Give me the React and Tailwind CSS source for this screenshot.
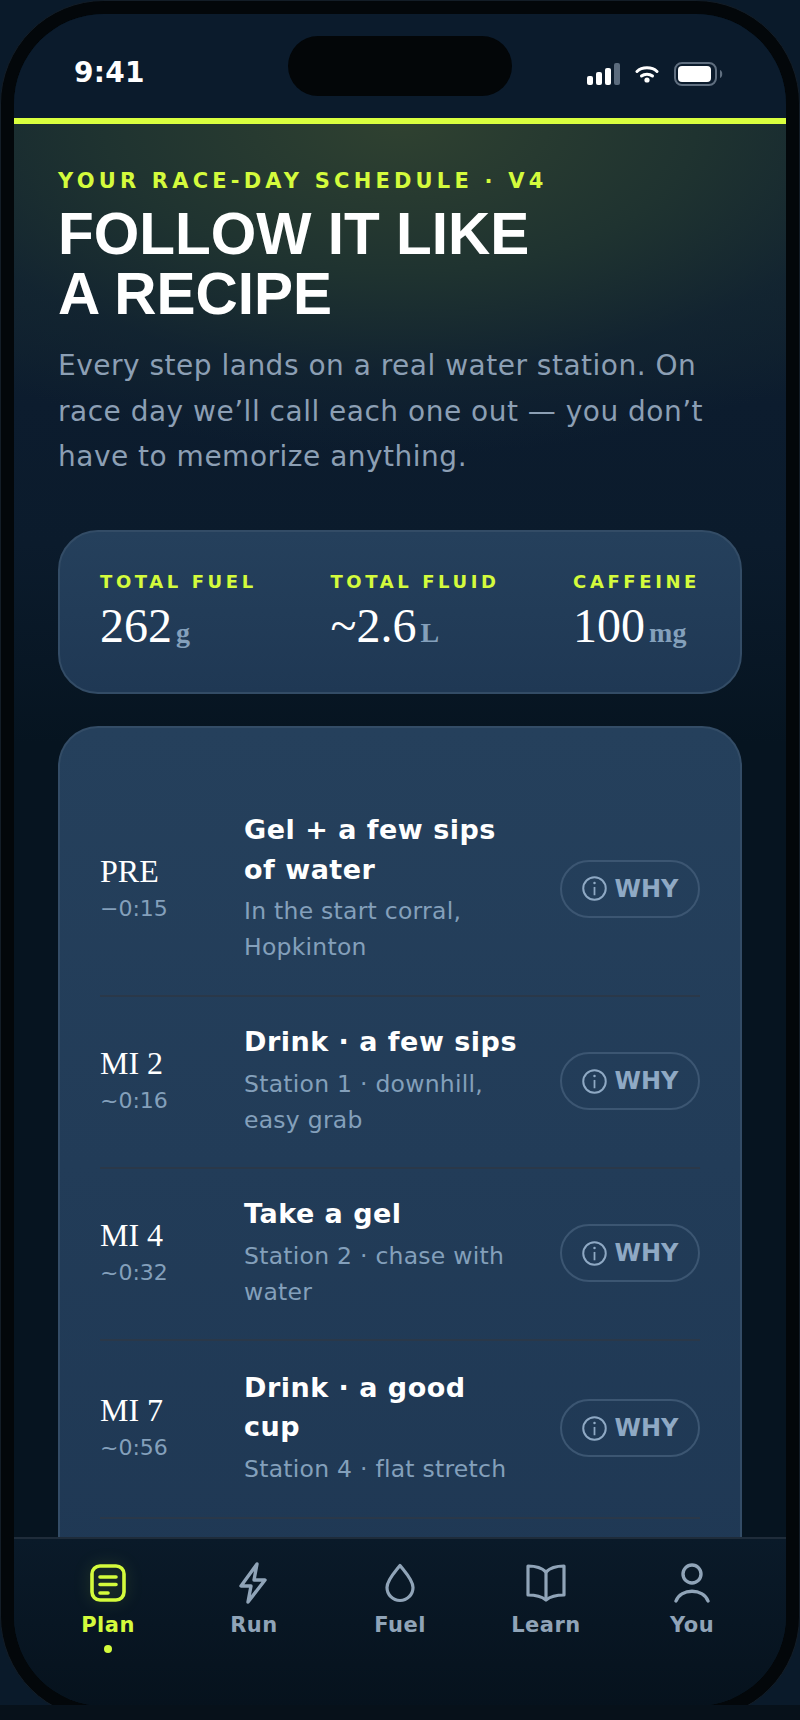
const rows = [
  { mile: "PRE", time: "−0:15", title: "Gel + a few sips of water", note: "In the start corral, Hopkinton", h: "h-[213px]" },
  { mile: "MI 2", time: "~0:16", title: "Drink · a few sips", note: "Station 1 · downhill, easy grab", h: "h-[172px]" },
  { mile: "MI 4", time: "~0:32", title: "Take a gel", note: "Station 2 · chase with water", h: "h-[172px]" },
  { mile: "MI 7", time: "~0:56", title: "Drink · a good cup", note: "Station 4 · flat stretch", h: "h-[178px]" },
];

function StatusIcons() {
  return (
    <div className="mt-[3px] flex items-center gap-[15px]">
      <svg width="33" height="22" viewBox="0 0 33 22">
        <rect x="0" y="13" width="6" height="9" rx="2" fill="#fff" />
        <rect x="9" y="9" width="6" height="13" rx="2" fill="#fff" />
        <rect x="18" y="5" width="6" height="17" rx="2" fill="#fff" />
        <rect x="27" y="0" width="6" height="22" rx="2" fill="#5b6b7d" />
      </svg>
      <svg width="24" height="18" viewBox="0 0 24 18" fill="none" stroke="#fff" strokeWidth="3" strokeLinecap="round">
        <path d="M2 6.5 C7 1.5 17 1.5 22 6.5" />
        <path d="M6.5 11 C9.5 8.5 14.5 8.5 17.5 11" />
        <circle cx="12" cy="15" r="2.6" fill="#fff" stroke="none" />
      </svg>
      <svg width="49" height="24" viewBox="0 0 49 24" fill="none">
        <rect x="1" y="1" width="41" height="22" rx="7" stroke="#5f6e7f" strokeWidth="2" />
        <rect x="4" y="4" width="33" height="16" rx="4" fill="#fff" />
        <path d="M46 8 C49 9 49 15 46 16 Z" fill="#5f6e7f" />
      </svg>
    </div>
  );
}

function InfoIcon() {
  return (
    <svg width="25" height="25" viewBox="0 0 24 24" fill="none" stroke="currentColor" strokeWidth="1.9">
      <circle cx="12" cy="12" r="10.8" />
      <path d="M12 10.5 V18.5" strokeWidth="1.7" />
      <circle cx="12" cy="6.8" r="1.2" fill="currentColor" stroke="none" />
    </svg>
  );
}

function Row({ mile, time, title, note, h }) {
  return (
    <div className={`${h} flex items-center border-b-2 border-[#2a3849] pb-[1px]`}>
      <div className="w-[144px] shrink-0 pb-[3px] text-[32px] leading-[40px] text-white font-['Liberation_Serif',serif]">
        <div>{mile}</div>
        <div className="mt-[3px] text-[22px] leading-[30px] text-[#84a0bb] font-['DejaVu_Sans',sans-serif]">{time}</div>
      </div>
      <div className="flex-1 pb-[2px] pr-[36px]">
        <div className="text-[27px] leading-[39.5px] font-bold text-white tracking-[0.5px]">{title}</div>
        <div className="mt-[4px] text-[23.5px] leading-[36px] text-[#84a0bb] tracking-[0.25px]">{note}</div>
      </div>
      <button className="w-[140px] h-[58px] shrink-0 flex items-center justify-center gap-[8px] rounded-full border-2 border-[#3c5672] text-[#8fa9c4] text-[24px] font-bold">
        <InfoIcon />
        WHY
      </button>
    </div>
  );
}

function Stat({ label, value, unit }) {
  return (
    <div>
      <div className="text-[18px] leading-[24px] font-bold tracking-[3.6px] text-[#d4fb3c]">{label}</div>
      <div className="mt-[6px] flex items-baseline font-['Liberation_Serif',serif]">
        <span className="text-[48px] leading-[52px] text-white">{value}</span>
        <span className="ml-[4px] text-[28px] font-bold text-[#84a0bb]">{unit}</span>
      </div>
    </div>
  );
}

function NavItem({ icon, label, active }) {
  return (
    <div className={`relative flex w-[146px] flex-col items-center ${active ? "text-[#d4fb3c]" : "text-[#90a4b8]"}`}>
      <div className="flex h-[44px] items-center justify-center">{icon}</div>
      <div className="mt-[6px] text-[21px] leading-[28px] font-bold tracking-[0.5px]">{label}</div>
      {active && <div className="absolute top-[84px] h-[8px] w-[8px] rounded-full bg-[#d4fb3c]" />}
    </div>
  );
}

export default function App() {
  return (
    <div className="relative h-[1720px] w-[800px] overflow-hidden bg-[#0a1a2a] font-['DejaVu_Sans',sans-serif]">
      {/* phone frame */}
      <div className="h-full w-full rounded-[104px] border border-[#131d27] bg-[#03070a] p-[13px]">
        <div className="relative flex h-full w-full flex-col overflow-hidden rounded-[90px] bg-[#071724]">
          {/* status bar */}
          <div className="flex h-[104px] shrink-0 items-center justify-between bg-[#0b1b2c] pl-[60px] pr-[63px] pt-[13px]">
            <span className="text-[28px] font-bold tracking-[0.3px] text-white">9:41</span>
            <StatusIcons />
            <div className="absolute left-[274px] top-[22px] h-[60px] w-[224px] rounded-full bg-[#030608]" />
          </div>
          <div className="h-[6px] shrink-0 bg-[#d9ff3e]" />

          {/* scrolling content */}
          <div className="min-h-0 flex-1 overflow-hidden bg-[radial-gradient(ellipse_85%_330px_at_50%_0%,#2f4130_0%,#1f3330_45%,rgba(20,38,50,0.6)_75%,rgba(12,28,46,0)_100%),linear-gradient(180deg,#172a2e_0px,#0c1c2e_280px,#0b1b2c_420px,#061420_620px)] px-[44px]">
            <div className="mt-[44px] text-[21px] leading-[26px] font-bold tracking-[4.2px] text-[#d4fb3c]">YOUR RACE-DAY SCHEDULE · V4</div>
            <h1 className="mt-[10px] text-[58.5px] leading-[60px] font-bold text-white font-['Liberation_Sans',sans-serif]">
              FOLLOW IT LIKE<br />A RECIPE
            </h1>
            <p className="mt-[19px] text-[28px] leading-[45.5px] text-[#8c9fb4] tracking-[0.5px]">
              Every step lands on a real water station. On race day we’ll call each one out — you don’t have to memorize anything.
            </p>

            <div className="mt-[50px] flex h-[164px] items-center justify-between rounded-[40px] border-2 border-[#334c66] bg-[linear-gradient(180deg,#25405c,#1f3854)] px-[40px]">
              <Stat label="TOTAL FUEL" value="262" unit="g" />
              <Stat label="TOTAL FLUID" value="~2.6" unit="L" />
              <Stat label="CAFFEINE" value="100" unit="mg" />
            </div>

            <div className="mt-[32px] rounded-t-[40px] border-2 border-b-0 border-[#334c66] bg-[linear-gradient(180deg,#25405c,#1f3854)] px-[40px] pb-[80px] pt-[56px]">
              {rows.map((r) => (
                <Row key={r.mile} {...r} />
              ))}
            </div>
          </div>

          {/* tab bar */}
          <nav className="flex h-[169px] shrink-0 justify-center border-t-2 border-[#1f2c3a] bg-[linear-gradient(180deg,#0a1a29,#06121d)] pt-[22px]">
            <NavItem
              active
              label="Plan"
              icon={
                <svg className="drop-shadow-[0_0_8px_rgba(212,251,60,0.2)]" width="36" height="38" viewBox="0 0 36 38" fill="none" stroke="currentColor" strokeWidth="3.6" strokeLinecap="round">
                  <rect x="2" y="2" width="32" height="34" rx="8" />
                  <path d="M10 13 H26 M10 20.5 H26 M10 29 H18" />
                </svg>
              }
            />
            <NavItem
              label="Run"
              icon={
                <svg className="-ml-[2px]" width="30" height="44" viewBox="0 0 30 44" fill="none" stroke="currentColor" strokeWidth="3.4" strokeLinejoin="round">
                  <path d="M19 3 L3 25 H13 L10 41 L27 19 H16 Z" />
                </svg>
              }
            />
            <NavItem
              label="Fuel"
              icon={
                <svg width="30" height="40" viewBox="0 0 30 40" fill="none" stroke="currentColor" strokeWidth="3.2" strokeLinejoin="round">
                  <path d="M15 2.5 C20 9 28 17 28 24.5 A13 13 0 0 1 2 24.5 C2 17 10 9 15 2.5 Z" />
                </svg>
              }
            />
            <NavItem
              label="Learn"
              icon={
                <svg width="40" height="38" viewBox="0 0 40 38" fill="none" stroke="currentColor" strokeWidth="3.2" strokeLinejoin="round">
                  <path d="M20 8 C15 3 8 2 2 2 V31 C8 31 15 32 20 36 C25 32 32 31 38 31 V2 C32 2 25 3 20 8 Z" />
                  <path d="M20 8 V35" />
                </svg>
              }
            />
            <NavItem
              label="You"
              icon={
                <svg width="38" height="40" viewBox="0 0 38 40" fill="none" stroke="currentColor" strokeWidth="3.4" strokeLinecap="round">
                  <circle cx="19" cy="11" r="9" />
                  <path d="M3 38 C8 25 30 25 35 38" />
                </svg>
              }
            />
          </nav>
        </div>
      </div>
      {/* strip over the bottom of the frame */}
      <div className="absolute bottom-0 left-0 h-[15px] w-full bg-[#07111a]" />
    </div>
  );
}
